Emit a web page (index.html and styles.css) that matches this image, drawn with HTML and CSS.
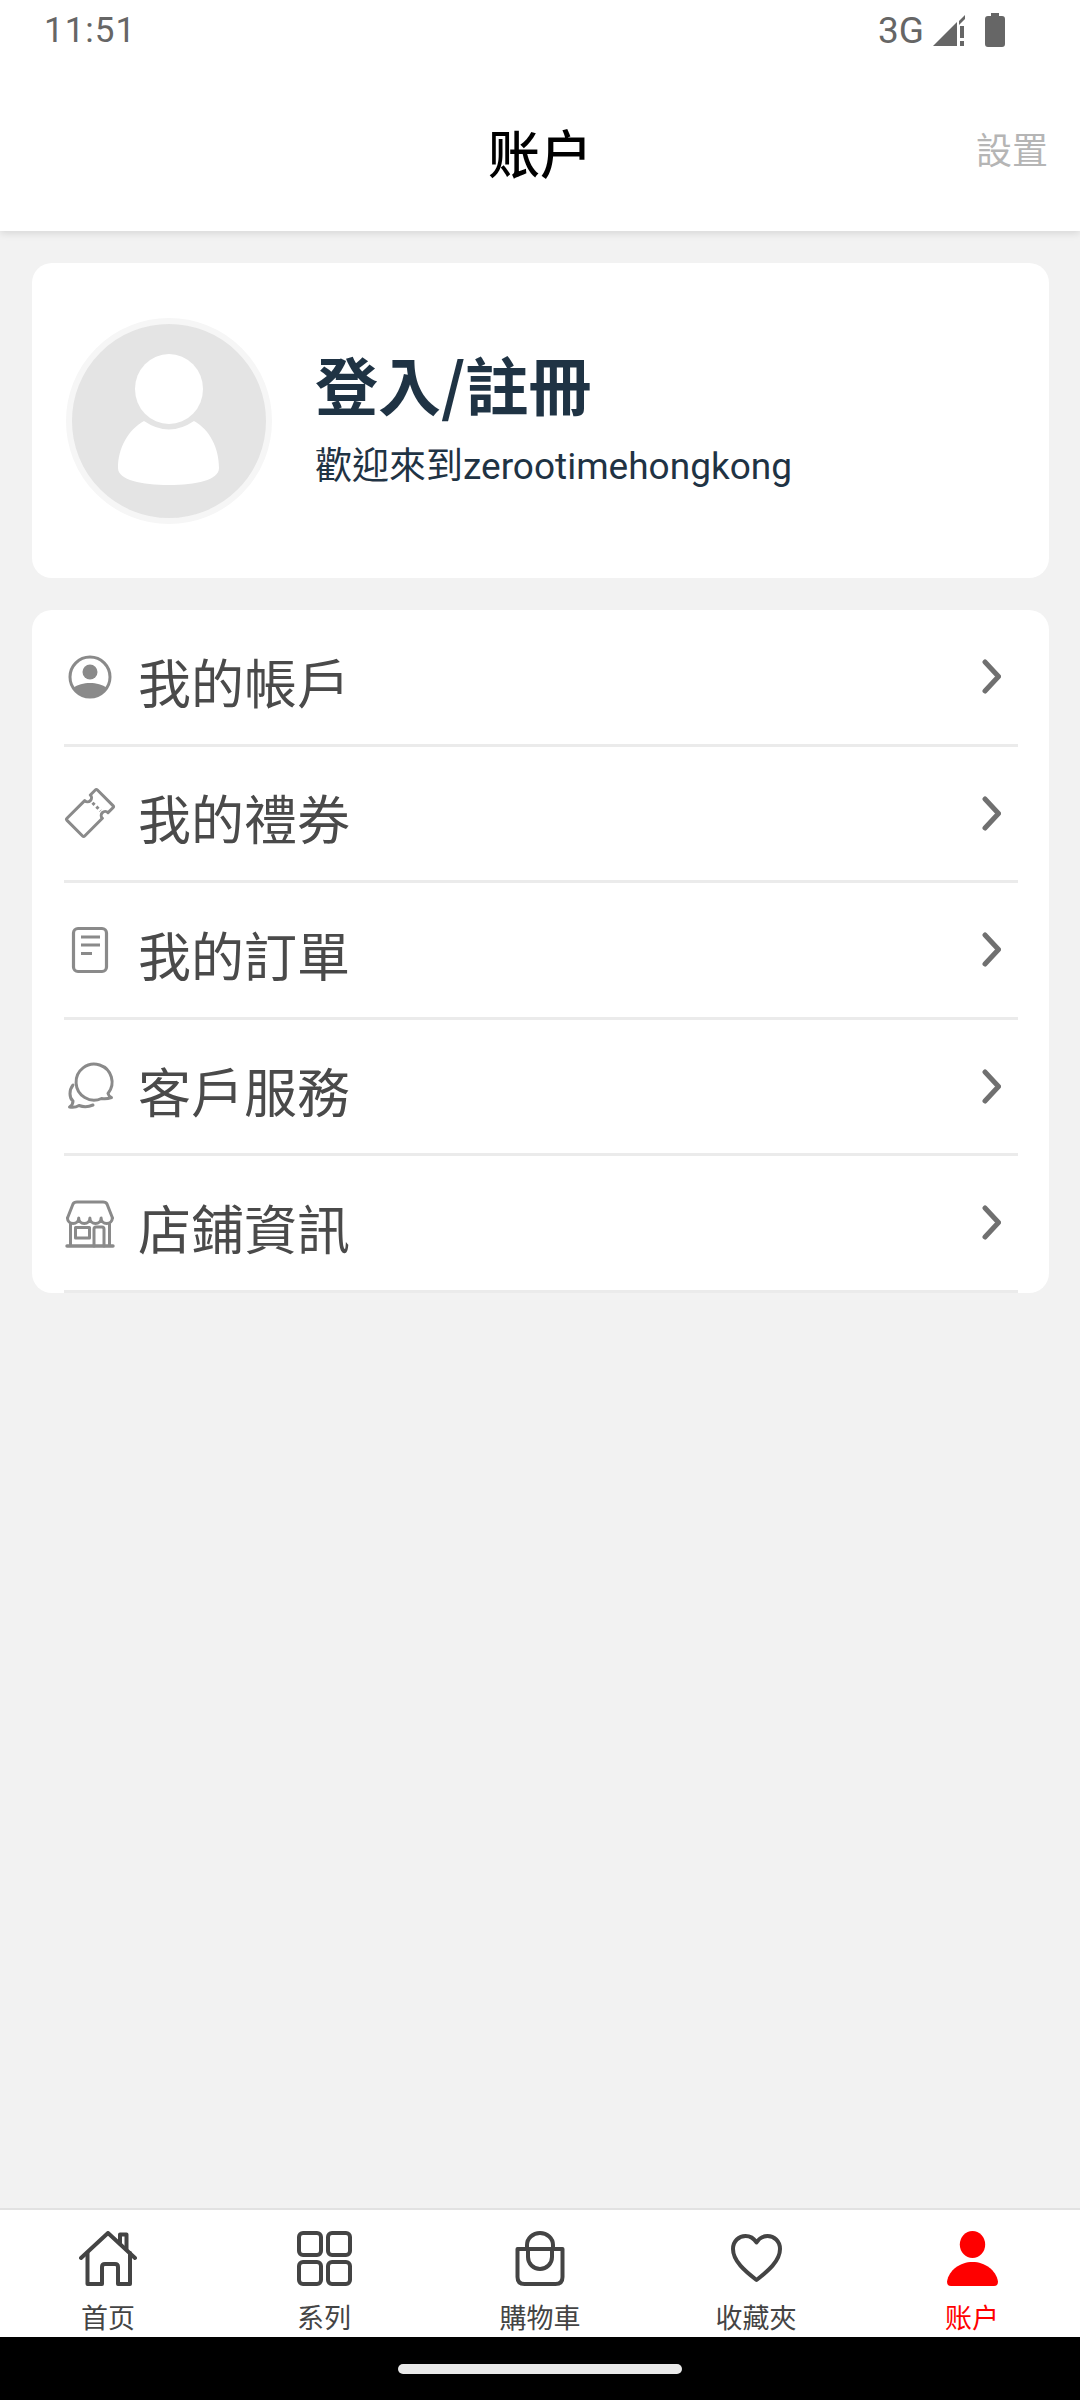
FILE: index.html
```html
<!DOCTYPE html>
<html lang="zh-Hant">
<head>
<meta charset="utf-8">
<title>账户</title>
<link rel="stylesheet" href="styles.css">
</head>
<body>
<div class="page">
  <header class="header">
    <div class="status">
      <span class="time">11:51</span>
      <div class="status-right">
        <span class="net">3G</span>
        <svg class="sig" width="33" height="34" viewBox="0 0 33 34"><path d="M0 33 L24 9 V33 Z" fill="#666"/><path d="M32 2 V6 L26 12 V8 Z" fill="#666"/><rect x="27" y="13" width="4" height="12" fill="#666"/><rect x="27" y="28" width="4" height="5" fill="#666"/></svg>
        <svg class="bat" width="20" height="34" viewBox="0 0 20 34"><path d="M6 0 H14 V3 H17 Q20 3 20 6 V31 Q20 34 17 34 H3 Q0 34 0 31 V6 Q0 3 3 3 H6 Z" fill="#666"/></svg>
      </div>
    </div>
    <div class="titlebar">
      <span></span>
      <h1 class="title" lang="zh-CN">账户</h1>
      <span class="settings">設置</span>
    </div>
  </header>

  <main class="main">
    <section class="card profile">
      <div class="avatar">
        <svg width="206" height="206" viewBox="0 0 206 206">
          <circle cx="103" cy="103" r="100" fill="#e4e4e4" stroke="#f6f6f6" stroke-width="6"/>
          <path d="M52 150 C52 130 62 112 78 103 Q103 120 128 103 C144 112 153 130 153 150 C153 162 130 167 103 167 C76 167 52 162 52 150Z" fill="#fff"/>
          <ellipse cx="103" cy="71" rx="34" ry="35" fill="#fff"/>
        </svg>
      </div>
      <div class="profile-text">
        <div class="login">登入/註冊</div>
        <div class="welcome">歡迎來到zerootimehongkong</div>
      </div>
    </section>

    <section class="card menu">
      <div class="row">
        <svg class="row-icon" width="52" height="52" viewBox="0 0 52 52">
          <circle cx="26" cy="26" r="20" fill="none" stroke="#8a8a8a" stroke-width="3"/>
          <circle cx="26" cy="21" r="7.5" fill="#8a8a8a"/>
          <path d="M9.3 37 C13 33.5 20 32 26 32 C32 32 39 33.5 42.7 37 A20 20 0 0 1 9.3 37Z" fill="#8a8a8a"/>
        </svg>
        <span class="row-label">我的帳戶</span>
        <svg class="chev" width="19" height="35" viewBox="0 0 19 35"><path d="M3 3 L16.5 17.5 L3 32" fill="none" stroke="#707070" stroke-width="5" stroke-linecap="round" stroke-linejoin="round"/></svg>
      </div>
      <div class="row">
        <svg class="row-icon" width="52" height="52" viewBox="0 0 52 52">
          <g transform="rotate(-45 26 26)" fill="none" stroke="#8a8a8a" stroke-width="3" stroke-linejoin="round">
            <path d="M6 13.5 H31 a4 4 0 0 0 8 0 H46 a1.5 1.5 0 0 1 1.5 1.5 V37 a1.5 1.5 0 0 1 -1.5 1.5 H39 a4 4 0 0 0 -8 0 H6 a1.5 1.5 0 0 1 -1.5 -1.5 V15 a1.5 1.5 0 0 1 1.5 -1.5Z"/>
            <path d="M35 20.5 V32" stroke-dasharray="3 2.5"/>
          </g>
        </svg>
        <span class="row-label">我的禮券</span>
        <svg class="chev" width="19" height="35" viewBox="0 0 19 35"><path d="M3 3 L16.5 17.5 L3 32" fill="none" stroke="#707070" stroke-width="5" stroke-linecap="round" stroke-linejoin="round"/></svg>
      </div>
      <div class="row">
        <svg class="row-icon" width="52" height="52" viewBox="0 0 52 52">
          <rect x="9.5" y="4.5" width="33" height="43" rx="4.5" fill="none" stroke="#8a8a8a" stroke-width="3.2"/>
          <path d="M17 13 H36 M17 21 H36 M17 29.5 H28" fill="none" stroke="#8a8a8a" stroke-width="3"/>
        </svg>
        <span class="row-label">我的訂單</span>
        <svg class="chev" width="19" height="35" viewBox="0 0 19 35"><path d="M3 3 L16.5 17.5 L3 32" fill="none" stroke="#707070" stroke-width="5" stroke-linecap="round" stroke-linejoin="round"/></svg>
      </div>
      <div class="row">
        <svg class="row-icon" width="52" height="52" viewBox="0 0 52 52">
          <g fill="none" stroke="#8a8a8a" stroke-width="3" stroke-linejoin="round" stroke-linecap="round">
            <path d="M37.5 38.5 A18 18 0 1 1 44 33.5 Q44.5 36 47.5 37.5 Q42 39.5 37.5 38.5Z"/>
            <path d="M9 25 C5 30 5 38 9 41 Q9 45 5.5 47 Q11 48 15 45.5 Q22 48 29 45"/>
          </g>
        </svg>
        <span class="row-label">客戶服務</span>
        <svg class="chev" width="19" height="35" viewBox="0 0 19 35"><path d="M3 3 L16.5 17.5 L3 32" fill="none" stroke="#707070" stroke-width="5" stroke-linecap="round" stroke-linejoin="round"/></svg>
      </div>
      <div class="row">
        <svg class="row-icon" width="52" height="52" viewBox="0 0 52 52">
          <g fill="none" stroke="#8a8a8a" stroke-width="3" stroke-linejoin="round" stroke-linecap="round">
            <path d="M3.5 21 L9 7 Q10 5 13 5 H39 Q42 5 43 7 L48.5 21"/>
            <path d="M3.5 21 a5.6 5.6 0 0 0 11.2 0 a5.6 5.6 0 0 0 11.2 0 a5.6 5.6 0 0 0 11.2 0 a5.6 5.6 0 0 0 11.2 0"/>
            <path d="M6.5 27 V48 M45.5 27 V48"/>
            <path d="M3 49 H49" stroke-width="3.4"/>
            <rect x="11.5" y="30.5" width="14" height="10.5"/>
            <path d="M30 49 V32 Q30 30 32 30 H38 Q40 30 40 32 V49"/>
          </g>
        </svg>
        <span class="row-label">店鋪資訊</span>
        <svg class="chev" width="19" height="35" viewBox="0 0 19 35"><path d="M3 3 L16.5 17.5 L3 32" fill="none" stroke="#707070" stroke-width="5" stroke-linecap="round" stroke-linejoin="round"/></svg>
      </div>
    </section>
  </main>

  <nav class="tabs">
    <div class="tab">
      <svg class="tab-icon" width="58" height="55" viewBox="0 0 58 55" fill="none" stroke="#444" stroke-width="4" stroke-linejoin="round" stroke-linecap="round">
        <path d="M2 27 L29 2 L56 27"/>
        <path d="M8.5 22 V53 H23 V36 q0 -3 3 -3 h10 q3 0 3 3 V53 H51 V22"/>
        <path d="M41 12.5 V3.5 H47.5 V18"/>
      </svg>
      <span class="tab-label tab-label-sc" lang="zh-CN">首页</span>
    </div>
    <div class="tab">
      <svg class="tab-icon" width="55" height="55" viewBox="0 0 55 55" fill="none" stroke="#444" stroke-width="4">
        <rect x="2" y="2" width="22" height="22" rx="4"/>
        <rect x="31" y="2" width="22" height="22" rx="4"/>
        <rect x="2" y="31" width="22" height="22" rx="4"/>
        <rect x="31" y="31" width="22" height="22" rx="4"/>
      </svg>
      <span class="tab-label tab-label-sc" lang="zh-CN">系列</span>
    </div>
    <div class="tab">
      <svg class="tab-icon" width="50" height="55" viewBox="0 0 50 55" fill="none" stroke="#444" stroke-width="4" stroke-linejoin="round">
        <path d="M2.5 18 H47.5 V46 q0 7 -7 7 H9.5 q-7 0 -7 -7 Z"/>
        <path d="M12 18 V14 A13 12 0 0 1 38 14 V18"/>
        <path d="M13 18 V26 A12 12 0 0 0 37 26 V18"/>
      </svg>
      <span class="tab-label">購物車</span>
    </div>
    <div class="tab">
      <svg class="tab-icon" width="51" height="55" viewBox="0 0 51 55" fill="none" stroke="#444" stroke-width="4" stroke-linejoin="round">
        <path d="M25.5 49 C14 40 2 30 2 18 C2 10 8 5 14.5 5 C19 5 23 7.5 25.5 11.5 C28 7.5 32 5 36.5 5 C43 5 49 10 49 18 C49 30 37 40 25.5 49Z"/>
      </svg>
      <span class="tab-label">收藏夾</span>
    </div>
    <div class="tab tab-active">
      <svg class="tab-icon" width="51" height="55" viewBox="0 0 51 55" fill="#f00">
        <ellipse cx="25.5" cy="13.5" rx="12.7" ry="13.5"/>
        <path d="M0 50.5 C2 39 13 31 25.5 31 C38 31 49 39 51 50.5 Q51 55 47 55 H4 Q0 55 0 50.5Z"/>
      </svg>
      <span class="tab-label tab-label-sc" lang="zh-CN">账户</span>
    </div>
  </nav>

  <div class="navbar"><span class="pill"></span></div>
</div>
</body>
</html>
```
FILE: styles.css
```css
* { box-sizing: border-box; }
html, body { margin: 0; padding: 0; }
body {
  font-family: "Noto Sans CJK TC", "Noto Sans", sans-serif;
  background: #f2f2f2;
}
.page {
  width: 1080px;
  height: 2400px;
  display: flex;
  flex-direction: column;
  overflow: hidden;
  background: #f2f2f2;
}
.header {
  height: 231px;
  background: #fff;
  box-shadow: 0 2px 8px rgba(0, 0, 0, 0.12);
  position: relative;
  z-index: 1;
}
.status {
  height: 60px;
  display: flex;
  align-items: center;
  justify-content: space-between;
  padding: 0 75px 0 44px;
  color: #666;
  font-family: Roboto, sans-serif;
}
.time { font-size: 35px; letter-spacing: 1px; }
.status-right { display: flex; align-items: center; }
.net { font-size: 37px; font-weight: 400; margin-right: 9px; }
.sig { margin-right: 19px; }
.titlebar {
  height: 171px;
  padding: 13px 32px 0;
  display: grid;
  grid-template-columns: 1fr auto 1fr;
  align-items: center;
}
.title {
  margin: 0;
  font-family: "Noto Sans CJK SC", sans-serif;
  font-size: 52px;
  font-weight: 500;
  color: #000;
  line-height: 1.2;
}
.settings {
  justify-self: end;
  font-size: 36px;
  color: #b5b5b5;
  line-height: 1.2;
  margin-top: -7px;
}
.main {
  flex: 1;
  padding: 32px 31px 0 32px;
  display: flex;
  flex-direction: column;
  gap: 32px;
}
.card {
  background: #fff;
  border-radius: 20px;
}
.profile {
  height: 315px;
  display: flex;
  align-items: center;
  padding-left: 34px;
  gap: 43px;
}
.avatar { display: flex; }
.login {
  font-size: 63px;
  font-weight: 700;
  color: #1f3344;
  line-height: 76px;
  margin-top: -6px;
}
.welcome {
  font-family: Roboto, "Noto Sans CJK TC", sans-serif;
  font-size: 37px;
  color: #1f3344;
  line-height: 48px;
  margin-top: 22px;
}
.menu { height: 683px; }
.row {
  height: 136.5px;
  margin: 0 31px 0 32px;
  border-bottom: 3px solid #ebebeb;
  display: flex;
  align-items: center;
}
.row-icon { flex: none; margin-right: 22px; }
.row-label {
  flex: 1;
  font-size: 53px;
  color: #4a4a4a;
  line-height: 66px;
  position: relative;
  top: 4px;
}
.chev { flex: none; margin-right: 17px; }
.tabs {
  height: 129px;
  background: #fff;
  border-top: 2px solid #e2e2e2;
  display: flex;
  padding-top: 21px;
}
.tab {
  width: 216px;
  display: flex;
  flex-direction: column;
  align-items: center;
  color: #444;
}
.tab-icon { flex: none; }
.tab-label {
  font-size: 27px;
  line-height: 34px;
  margin-top: 14px;
}
.tab-label-sc { font-family: "Noto Sans CJK SC", sans-serif; }
.tab-active { color: #f00; }
.navbar {
  height: 63px;
  background: #000;
  display: flex;
  justify-content: center;
  padding-top: 27px;
}
.pill {
  width: 284px;
  height: 10px;
  border-radius: 5px;
  background: #e9e9e9;
}
```
